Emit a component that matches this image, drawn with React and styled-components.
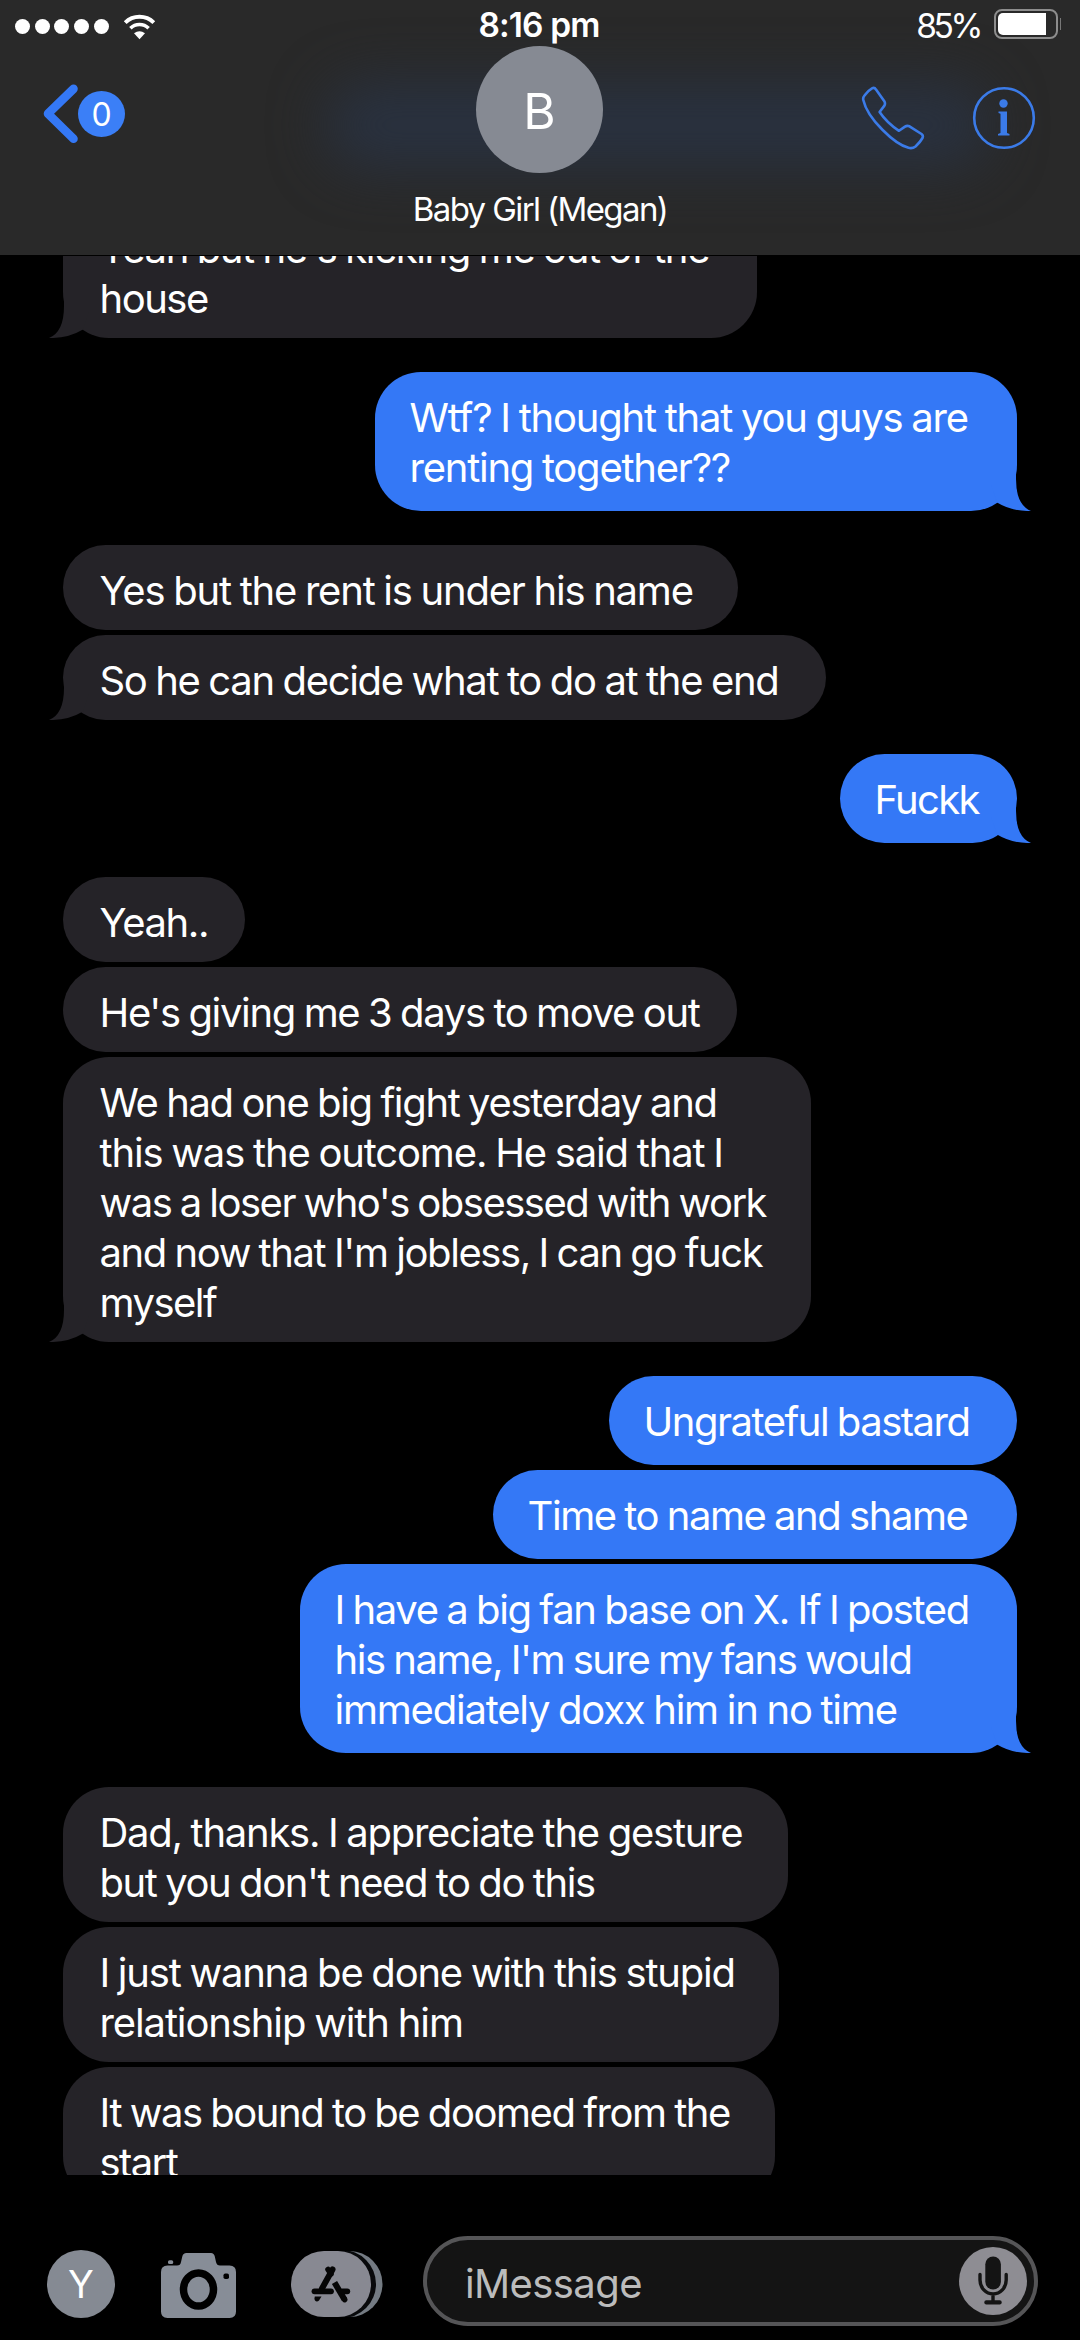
import React from 'react';
import styled, { createGlobalStyle, css } from 'styled-components';

// every line is [text, tracking in px]
const thread = [
    {
        from: 'her',
        bubbles: [{ width: 694, lines: [["Yeah but he's kicking me out of the", -1.36], ['house', -1.5]] }],
    },
    {
        from: 'me',
        bubbles: [{ width: 642, lines: [['Wtf? I thought that you guys are', -1.21], ['renting together??', -1.24]] }],
    },
    {
        from: 'her',
        bubbles: [
            { width: 675, lines: [['Yes but the rent is under his name', -1.21]] },
            { width: 763, lines: [['So he can decide what to do at the end', -1.31]] },
        ],
    },
    {
        from: 'me',
        bubbles: [{ width: 177, lines: [['Fuckk', -1.7]] }],
    },
    {
        from: 'her',
        bubbles: [
            { width: 182, lines: [['Yeah..', -1.4]] },
            { width: 674, lines: [["He's giving me 3 days to move out", -1.34]] },
            {
                width: 748,
                lines: [
                    ['We had one big fight yesterday and', -1.35],
                    ['this was the outcome. He said that I', -1.16],
                    ["was a loser who's obsessed with work", -1.51],
                    ["and now that I'm jobless, I can go fuck", -1.4],
                    ['myself', -1.5],
                ],
            },
        ],
    },
    {
        from: 'me',
        bubbles: [
            { width: 408, lines: [['Ungrateful bastard', -1.49]] },
            { width: 524, lines: [['Time to name and shame', -1.43]] },
            {
                width: 717,
                lines: [
                    ['I have a big fan base on X. If I posted', -1.37],
                    ["his name, I'm sure my fans would", -1.44],
                    ['immediately doxx him in no time', -1.22],
                ],
            },
        ],
    },
    {
        from: 'her',
        open: true,
        bubbles: [
            { width: 725, lines: [['Dad, thanks. I appreciate the gesture', -1.26], ["but you don't need to do this", -1.39]] },
            { width: 716, lines: [['I just wanna be done with this stupid', -1.21], ['relationship with him', -1.12]] },
            { width: 712, lines: [['It was bound to be doomed from the', -1.44], ['start', -1.6]] },
        ],
    },
];

const WifiIcon = () => (
    <svg width="33" height="26" viewBox="0 0 33 26">
        <path d="M2.2 8.6 A20.5 20.5 0 0 1 30.8 8.6" fill="none" stroke="#fff" strokeWidth="4" />
        <path d="M7.4 14.2 A13 13 0 0 1 25.6 14.2" fill="none" stroke="#fff" strokeWidth="3.6" />
        <path d="M11 19.2 Q16.5 15.2 22 19.2 L16.5 25.3 Z" fill="#fff" />
    </svg>
);

const BackIcon = () => (
    <svg width="36" height="60" viewBox="0 0 36 60">
        <path d="M30.5 4.8 L5 29.7 L30.5 54.8" fill="none" stroke="#3478f6" strokeWidth="8.6" strokeLinecap="round" strokeLinejoin="round" />
    </svg>
);

const PhoneIcon = () => (
    <svg width="64" height="64" viewBox="0 0 64 64">
        <path
            d="M3.5 9.5 Q7 4.5 11 2.3 Q13.5 1 15 3.6 L23.5 15.5 Q24.5 17.5 23.4 19.6 L18.6 26 Q26 37 38 44.8 L44 40.6 Q46 39.4 48.5 40.3 L60.5 48 Q62.6 49.6 61.5 52 Q59 56.5 54.5 60.5 Q51.5 62.8 47.5 61.8 C34 58.5 6.5 33 2.3 14 Q1.7 11.7 3.5 9.5 Z"
            fill="none" stroke="#3b7be8" strokeWidth="2.6" strokeLinejoin="round"
        />
    </svg>
);

const InfoIcon = () => (
    <svg width="64" height="64" viewBox="0 0 64 64">
        <circle cx="32" cy="32" r="29.8" fill="none" stroke="#3b7be8" strokeWidth="2.6" />
        <circle cx="31.5" cy="17.5" r="4.2" fill="#3b7be8" />
        <path d="M26.500 25.500 H35 V47 L37.500 48 V49.500 H26 V48 L28.500 47 V27.800 L26.500 27 Z" fill="#3b7be8" />
    </svg>
);

const CameraIcon = () => (
    <svg width="75" height="65" viewBox="0 0 75 65">
        <path
            fill="#878d97"
            d="M6.5 12.5 H16 Q19.5 12.5 20 9 L21.3 3.5 Q22 0 25.5 0 H50 Q53 0 53.8 3.5 L55 9 Q55.8 12.5 59 12.5 H68.5 Q75 12.5 75 19 V58.5 Q75 65 68.5 65 H6.5 Q0 65 0 58.5 V19 Q0 12.5 6.5 12.5 Z"
        />
        <rect x="7" y="7.2" width="5.2" height="3.8" rx="1.6" fill="#878d97" />
        <ellipse cx="37.5" cy="36.5" rx="15" ry="16.5" fill="#878d97" stroke="#000" strokeWidth="7.5" />
        <rect x="62.5" y="20.5" width="5.5" height="5.5" rx="1.8" fill="#000" />
    </svg>
);

const AppsIcon = () => (
    <svg width="92" height="66" viewBox="0 0 92 66">
        <rect x="11" width="80.5" height="66" rx="33" fill="#747b83" />
        <rect x="6" y="-1" width="79" height="68" rx="34" fill="#08090b" />
        <rect width="80" height="66" rx="33" fill="#888992" />
        <g stroke="#050505" strokeLinecap="round" fill="none">
            <path d="M41.5 18.500 L31 37.500" strokeWidth="6" />
            <path d="M37 18.500 L40 23" strokeWidth="5.500" />
            <path d="M43.5 31.500 L53.500 48.500" strokeWidth="6" strokeLinecap="butt" />
            <path d="M53.5 48.300 L53.700 48.600" strokeWidth="5.500" />
            <path d="M23.5 40.300 H40" strokeWidth="5.800" />
            <path d="M51.5 40.300 H56.300" strokeWidth="5.800" />
        </g>
        <path d="M23.8 45.5 H30.5 L28 49.5 Q25.8 51.5 24 49.5 Q23 48 23.8 45.5 Z" fill="#050505" />
    </svg>
);

const MicIcon = () => (
    <svg width="32" height="50" viewBox="0 0 32 50">
        <rect x="8.3" y="0.5" width="15.6" height="33" rx="7.8" fill="#141414" />
        <path d="M3 18.5 V24 A13.1 14 0 0 0 29.2 24 V18.5 M16 38.5 V45" fill="none" stroke="#141414" strokeWidth="3.4" strokeLinecap="round" />
        <rect x="7.3" y="44.3" width="17.4" height="4.3" rx="2" fill="#141414" />
    </svg>
);

const Tail = ({ me }) => (
    <TailSvg $me={me} width="50" height="46" viewBox="0 0 50 46">
        <path d="M15 0 V14 Q15 40 0 46 Q19 46.500 34 37.500 L40 20 V0 Z" />
    </TailSvg>
);

const App = () => (
    <Screen>
        <GlobalStyle />
        <Header>
            <StatusBar>
                <Signal>
                    {[0, 1, 2, 3, 4].map((n) => <Dot key={n} />)}
                    <WifiIcon />
                </Signal>
                <Clock>8:16 pm</Clock>
                <Power>
                    <Percent>85%</Percent>
                    <Battery><Charge /></Battery>
                    <BatteryCap />
                </Power>
            </StatusBar>
            <NavBar>
                <Back>
                    <BackIcon />
                    <Unread>0</Unread>
                </Back>
                <Avatar>B</Avatar>
                <Actions>
                    <PhoneIcon />
                    <InfoIcon />
                </Actions>
            </NavBar>
            <ContactName>Baby Girl (Megan)</ContactName>
        </Header>
        <Messages>
            {thread.map((group, i) => (
                <Group key={i} $me={group.from === 'me'}>
                    {group.bubbles.map((bubble, j) => (
                        <Bubble key={j} $me={group.from === 'me'} $width={bubble.width}>
                            {bubble.lines.map(([text, tracking]) => (
                                <Line key={text} $tracking={tracking}>{text}</Line>
                            ))}
                            {j === group.bubbles.length - 1 && !group.open && <Tail me={group.from === 'me'} />}
                        </Bubble>
                    ))}
                </Group>
            ))}
        </Messages>
        <Toolbar>
            <Me>Y</Me>
            <CameraIcon />
            <AppsIcon />
            <Input>
                <Placeholder>iMessage</Placeholder>
                <Mic><MicIcon /></Mic>
            </Input>
        </Toolbar>
    </Screen>
);

const GlobalStyle = createGlobalStyle`
  * { box-sizing: border-box; }
  body {
    margin: 0;
    background: #000;
  }
  svg { display: block; flex: none; }
`;

const center = css`
  display: flex;
  align-items: center;
  justify-content: center;
`;

const Screen = styled.div`
  width: 1080px;
  height: 2340px;
  display: flex;
  flex-direction: column;
  overflow: hidden;
  background: #000;
  color: #fff;
  font-family: Inter, "Liberation Sans", sans-serif;
`;

const Header = styled.header`
  position: relative;
  isolation: isolate;
  overflow: hidden;
  height: 255px;
  flex: none;
  background: #292929;

  /* blue bubble showing through the frosted bar */
  &::before {
    content: "";
    position: absolute;
    z-index: -1;
    left: 325px;
    top: 82px;
    width: 665px;
    height: 86px;
    border-radius: 43px;
    background: #29313f;
    filter: blur(27px);
  }
`;

const StatusBar = styled.div`
  height: 46px;
  display: grid;
  grid-template-columns: 1fr auto 1fr;
  padding: 0 19px 0 15px;
`;

const Signal = styled.div`
  display: flex;
  gap: 4.7px;
  padding-top: 19px;

  svg { margin: -5px 0 0 10px; }
`;

const Dot = styled.i`
  width: 15px;
  height: 15px;
  border-radius: 50%;
  background: #fff;
`;

const Clock = styled.div`
  font-size: 33.5px;
  font-weight: 600;
  line-height: 40px;
  letter-spacing: -0.9px;
  padding: 5px 0 0 2px;
`;

const Power = styled.div`
  display: flex;
  justify-content: flex-end;
`;

const Percent = styled.div`
  font-size: 33.5px;
  line-height: 40px;
  letter-spacing: -3.4px;
  padding-top: 6px;
  margin-right: 14px;
`;

const Battery = styled.div`
  width: 64px;
  height: 30px;
  margin-top: 9px;
  padding: 2px;
  border: 2px solid #8d8d8d;
  border-radius: 8px;
`;

const Charge = styled.div`
  width: 48px;
  height: 22px;
  border-radius: 5px 0 0 5px;
  background: #fff;
`;

const BatteryCap = styled.div`
  width: 1px;
  height: 12px;
  margin: 18px 0 0 2px;
  background: #777;
`;

const NavBar = styled.div`
  height: 127px;
  display: grid;
  grid-template-columns: 1fr 127px 1fr;
  padding: 0 44px 0 43px;
`;

const Back = styled.div`
  display: flex;
  padding-top: 38px;
`;

const Unread = styled.div`
  ${center}
  width: 47px;
  height: 46px;
  margin: 6.5px 0 0 -1px;
  padding-top: 1px;
  border-radius: 50%;
  background: #3b7ff7;
  font-size: 32px;
`;

const Avatar = styled.div`
  ${center}
  padding-top: 2px;
  border-radius: 50%;
  background: #868a93;
  font-size: 49.5px;
`;

const Actions = styled.div`
  display: flex;
  justify-content: flex-end;
  gap: 47px;
  padding-top: 40px;
`;

const ContactName = styled.div`
  text-align: center;
  font-size: 33px;
  line-height: 40px;
  letter-spacing: -1.6px;
  padding-top: 16px;
`;

const Messages = styled.main`
  height: 1919px;
  flex: none;
  margin-top: 1px;
  padding: 0 63px;
  display: flex;
  flex-direction: column;
  gap: 34px;
  overflow: hidden;

  > :first-child { margin-top: -53px; }
`;

const Group = styled.section`
  display: flex;
  flex-direction: column;
  gap: 5px;
  flex: none;
  align-items: ${(p) => (p.$me ? 'flex-end' : 'flex-start')};
`;

const Bubble = styled.div`
  position: relative;
  width: ${(p) => p.$width}px;
  padding: ${(p) => (p.$me ? '21px 0 18px 34.5px' : '20.5px 0 14.5px 36.5px')};
  border-radius: 46px;
  background: ${(p) => (p.$me ? '#3478f6' : '#252328')};
`;

const Line = styled.div`
  font-size: 40px;
  line-height: 50px;
  letter-spacing: ${(p) => p.$tracking}px;
  word-spacing: -1.2px;
  white-space: nowrap;
`;

const TailSvg = styled.svg`
  position: absolute;
  bottom: 0;
  ${(p) => (p.$me ? 'right: -14px; transform: scaleX(-1);' : 'left: -14px;')}
  fill: ${(p) => (p.$me ? '#3478f6' : '#252328')};
`;

const Toolbar = styled.footer`
  height: 165px;
  display: flex;
  align-items: flex-start;
  padding: 61px 42px 0 47px;

  > :nth-child(1) { margin-top: 14px; }
  > :nth-child(2) { margin: 17px 0 0 46px; }
  > :nth-child(3) { margin: 15px 0 0 55px; }
`;

const Me = styled.div`
  ${center}
  width: 68px;
  height: 68px;
  border-radius: 50%;
  background: #858a93;
  font-size: 38px;
`;

const Input = styled.div`
  display: flex;
  align-items: center;
  justify-content: space-between;
  flex: 1;
  height: 90px;
  margin-left: 40px;
  padding: 0 7px 0 38px;
  border: 4px solid #555557;
  border-radius: 45px;
  background: #141414;
`;

const Placeholder = styled.span`
  font-size: 40px;
  letter-spacing: -0.6px;
  color: #bcbcbc;
  padding-top: 5px;
`;

const Mic = styled.div`
  ${center}
  width: 68px;
  height: 68px;
  border-radius: 50%;
  background: #8e8d93;
`;

export default App;
